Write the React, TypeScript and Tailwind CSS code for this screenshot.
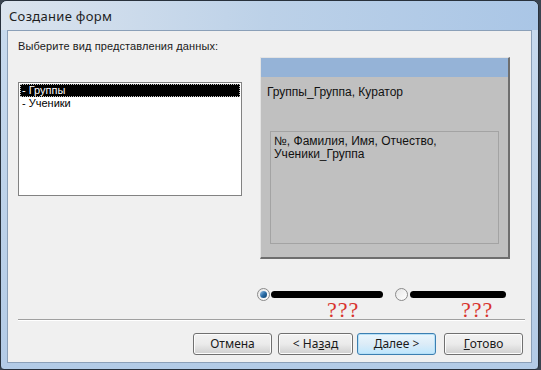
import React from 'react';

const ui = { fontFamily: '"Noto Sans", "Open Sans", sans-serif' };
const arial = { fontFamily: '"Liberation Sans", Arial, sans-serif' };
const serif = { fontFamily: '"Liberation Serif", serif' };

function Btn({ children, focused, w = 'w-[79px]' }: { children: React.ReactNode; focused?: boolean; w?: string }) {
  return (
    <div
      className={
        'h-[22px] flex items-center justify-center rounded-[3px] border text-[12px] text-[#1a1a1a] bg-gradient-to-b ' +
        w +
        ' ' +
        (focused
          ? 'border-[#3c7fb1] from-[#eaf6fd] via-[#dcecf7] to-[#bee6fd] shadow-[inset_0_0_0_1px_#b6e0f7]'
          : 'border-[#707070] from-[#f2f2f2] via-[#ebebeb] to-[#cfcfcf] shadow-[inset_0_0_0_1px_#fcfcfc]')
      }
    >
      {children}
    </div>
  );
}

function Radio({ checked }: { checked?: boolean }) {
  return (
    <div className="w-[13px] h-[13px] rounded-full border border-[#8a8a8a] bg-gradient-to-br from-[#e6e6e6] to-[#ffffff] flex items-center justify-center">
      {checked && (
        <div className="w-[7px] h-[7px] rounded-full bg-gradient-to-br from-[#9ac6e8] via-[#2b6ea8] to-[#0f3d66]" />
      )}
    </div>
  );
}

export default function App() {
  return (
    <div className="w-[541px] h-[370px] bg-[#3a4450] overflow-hidden" style={ui}>
      <div className="w-[539px] h-[370px] flex flex-col rounded-t-[7px] rounded-b-[4px] border border-[#28313c] bg-gradient-to-b from-[#c9dbee] to-[#b3cbe6]">
        {/* title bar */}
        <div className="h-[29px] shrink-0 flex items-center pl-[8px] rounded-t-[6px] bg-gradient-to-r from-[#dbe4ee] via-[#bcd1e8] to-[#aac6e6]">
          <span className="text-[13px] tracking-[0.3px] text-[#1e1e1e] mt-[2px]">Создание форм</span>
        </div>

        {/* client area */}
        <div className="mx-[6px] mb-[6px] flex-1 flex flex-col border border-[#8ba0b8] bg-[#f0f0f0]">
          <div className="flex pt-[8px] pl-[10px]">
            <div className="w-[224px] flex flex-col">
              <div className="h-[15px] leading-[15px] text-[11px] tracking-[0.1px] text-[#1a1a1a] whitespace-nowrap" style={arial}>
                Выберите вид представления данных:
              </div>
              <div className="mt-[28px] h-[114px] border border-[#828282] bg-white p-[1px] text-[11px] leading-[13px]" style={arial}>
                <div className="h-[13px] bg-black text-white pl-[2px] outline outline-1 outline-dotted outline-offset-[-1px] outline-[#c0c0c0]">
                  - Группы
                </div>
                <div className="h-[13px] text-black pl-[2px]">- Ученики</div>
              </div>
            </div>

            <div
              className="ml-[18px] mt-[18px] w-[250px] h-[202px] flex flex-col bg-[#c0c0c0] border-t border-l border-t-[#e3e3e3] border-l-[#e3e3e3] border-r-2 border-b-2 border-r-[#6e6e6e] border-b-[#6e6e6e] text-[12px] text-[#111]"
              style={arial}
            >
              <div className="h-[19px] shrink-0 bg-[#95b3d7]" />
              <div className="pl-[6px] mt-[9px] leading-[13px]">Группы_Группа, Куратор</div>
              <div className="ml-[9px] mt-[32px] w-[229px] h-[113px] border border-[#a3a3a3] pl-[3px] pt-[3px] leading-[13px]">
                №, Фамилия, Имя, Отчество,
                <br />
                Ученики_Группа
              </div>
            </div>
          </div>

          {/* radio options */}
          <div className="mt-[29px] h-[31px] flex pl-[249px]">
            <div className="w-[138px] flex flex-col">
              <div className="flex items-center">
                <Radio checked />
                <div className="ml-[1px] w-[112px] h-[7px] rounded-full bg-black" />
              </div>
              <div className="ml-[70px] -mt-[2px] text-[22px] leading-[22px] tracking-[1px] text-[#d8322c]" style={serif}>
                ???
              </div>
            </div>
            <div className="flex flex-col">
              <div className="flex items-center">
                <Radio />
                <div className="ml-[2px] w-[96px] h-[7px] rounded-full bg-black" />
              </div>
              <div className="ml-[66px] -mt-[2px] text-[22px] leading-[22px] tracking-[1px] text-[#d8322c]" style={serif}>
                ???
              </div>
            </div>
          </div>

          <div className="ml-[10px] w-[507px] h-[2px] border-t border-t-[#a0a0a0] border-b border-b-white" />

          {/* buttons */}
          <div className="mt-[12px] flex pl-[185px]">
            <Btn>Отмена</Btn>
            <div className="ml-[6px]">
              <Btn w="w-[75px]">
                &lt; На<span className="underline">з</span>ад
              </Btn>
            </div>
            <div className="ml-[4px]">
              <Btn focused>
                <span className="underline">Д</span>алее &gt;
              </Btn>
            </div>
            <div className="ml-[8px]">
              <Btn>
                <span className="underline">Г</span>отово
              </Btn>
            </div>
          </div>
        </div>
      </div>
    </div>
  );
}
